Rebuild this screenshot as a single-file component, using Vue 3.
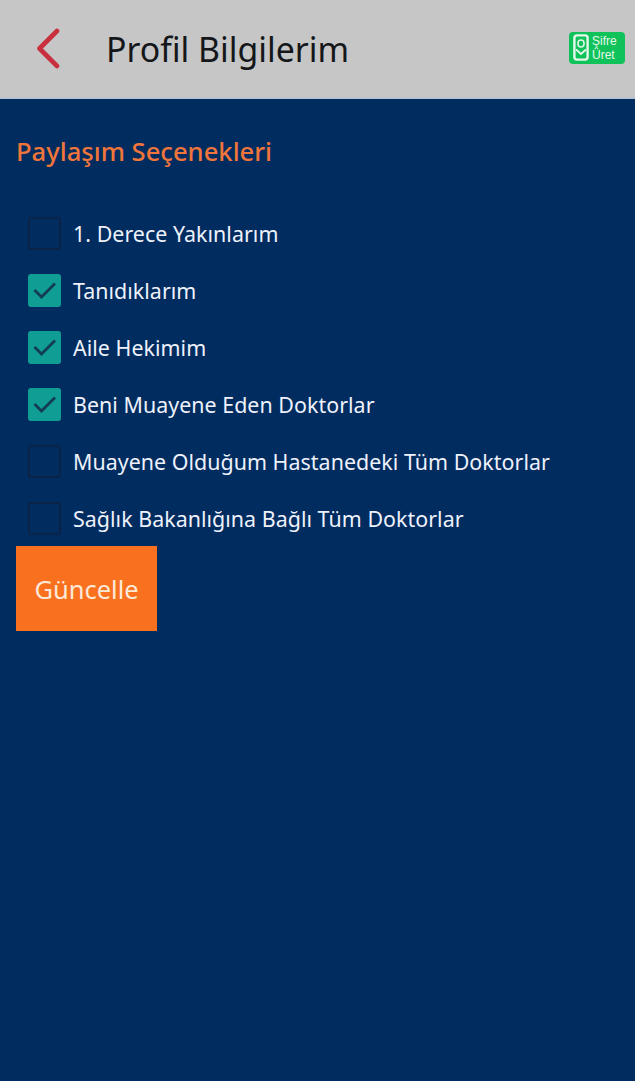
<script setup>
const options = [
  { label: '1. Derece Yakınlarım', checked: false },
  { label: 'Tanıdıklarım', checked: true },
  { label: 'Aile Hekimim', checked: true },
  { label: 'Beni Muayene Eden Doktorlar', checked: true },
  { label: 'Muayene Olduğum Hastanedeki Tüm Doktorlar', checked: false },
  { label: 'Sağlık Bakanlığına Bağlı Tüm Doktorlar', checked: false },
]
</script>

<template>
  <div class="page">
    <header class="bar">
      <svg class="back" width="26" height="42" viewBox="0 0 26 42">
        <path d="M22 3 L4.5 20.5 L22 38" fill="none" stroke="#c9303f" stroke-width="4.6" stroke-linecap="round" stroke-linejoin="round" />
      </svg>
      <h1 class="title">Profil Bilgilerim</h1>
      <div class="badge">
        <svg class="phone" width="16" height="27" viewBox="0 0 16 27">
          <rect x="1.4" y="1.4" width="13.2" height="24.2" rx="2.5" fill="none" stroke="#e4f7ea" stroke-width="2.4" />
          <rect x="5" y="6" width="6" height="7" rx="3" fill="none" stroke="#e4f7ea" stroke-width="1.6" />
          <path d="M3 15.5 L8 20 L13 15.5" fill="none" stroke="#e4f7ea" stroke-width="1.8" />
        </svg>
        <div class="badge-text"><span>Şifre</span><span>Üret</span></div>
      </div>
    </header>
    <main class="content">
      <h2 class="section">Paylaşım Seçenekleri</h2>
      <ul class="list">
        <li v-for="o in options" :key="o.label" class="row">
          <span class="box" :class="{ on: o.checked }">
            <svg v-if="o.checked" width="33" height="33" viewBox="0 0 33 33">
              <path d="M6.5 16 L13.5 23 L27 9.5" fill="none" stroke="#143d55" stroke-width="2.8" />
            </svg>
          </span>
          <span class="label">{{ o.label }}</span>
        </li>
      </ul>
      <button class="update">Güncelle</button>
    </main>
  </div>
</template>

<style>
html, body { margin: 0; background: #002c60; }
</style>

<style scoped>
.page {
  width: 635px;
  height: 1081px;
  display: flex;
  flex-direction: column;
  background: #002c60;
  font-family: "Noto Sans", "Open Sans", sans-serif;
  overflow: hidden;
}
.bar {
  height: 97px;
  flex: none;
  display: flex;
  align-items: center;
  background: #c6c6c6;
  border-bottom: 2px solid #b9c0d0;
  padding: 0 10px 0 35px;
}
.back { flex: none; }
.title {
  margin: 0 0 0 45px;
  font-size: 33.8px;
  font-weight: 400;
  color: #14161a;
  flex: 1;
  white-space: nowrap;
}
.badge {
  width: 56px;
  height: 32px;
  box-sizing: border-box;
  background: #0fc25a;
  border-radius: 4px;
  display: flex;
  align-items: center;
  gap: 3px;
  padding: 0 1px 0 4px;
  margin-bottom: 2px;
}
.badge-text {
  display: flex;
  flex-direction: column;
  font-family: "Liberation Sans", sans-serif;
  font-size: 12px;
  line-height: 14px;
  color: #e6f8ec;
}
.content {
  flex: 1;
  display: flex;
  flex-direction: column;
  align-items: flex-start;
  padding: 35px 0 0 16px;
}
.section {
  margin: 0;
  font-size: 25.6px;
  line-height: 36px;
  font-weight: 500;
  color: #f0753a;
  white-space: nowrap;
}
.list {
  list-style: none;
  margin: 35px 0 0;
  padding: 0;
  display: flex;
  flex-direction: column;
}
.row {
  height: 57px;
  display: flex;
  align-items: center;
  padding-left: 12px;
}
.box {
  width: 33px;
  height: 33px;
  box-sizing: border-box;
  flex: none;
  border: 2px solid #0b2347;
  border-radius: 3px;
  position: relative;
}
.box.on {
  border: 0;
  background: #0f9d94;
}
.box svg { display: block; }
.label {
  margin-left: 12px;
  font-size: 21.4px;
  letter-spacing: 0.04px;
  color: #eef1fa;
  white-space: nowrap;
}
.update {
  width: 141px;
  height: 85px;
  margin-top: -1px;
  border: 0;
  padding: 0;
  background: #f9701f;
  color: #fbe9d8;
  font-family: inherit;
  font-size: 25.5px;
  font-weight: 400;
}
</style>
